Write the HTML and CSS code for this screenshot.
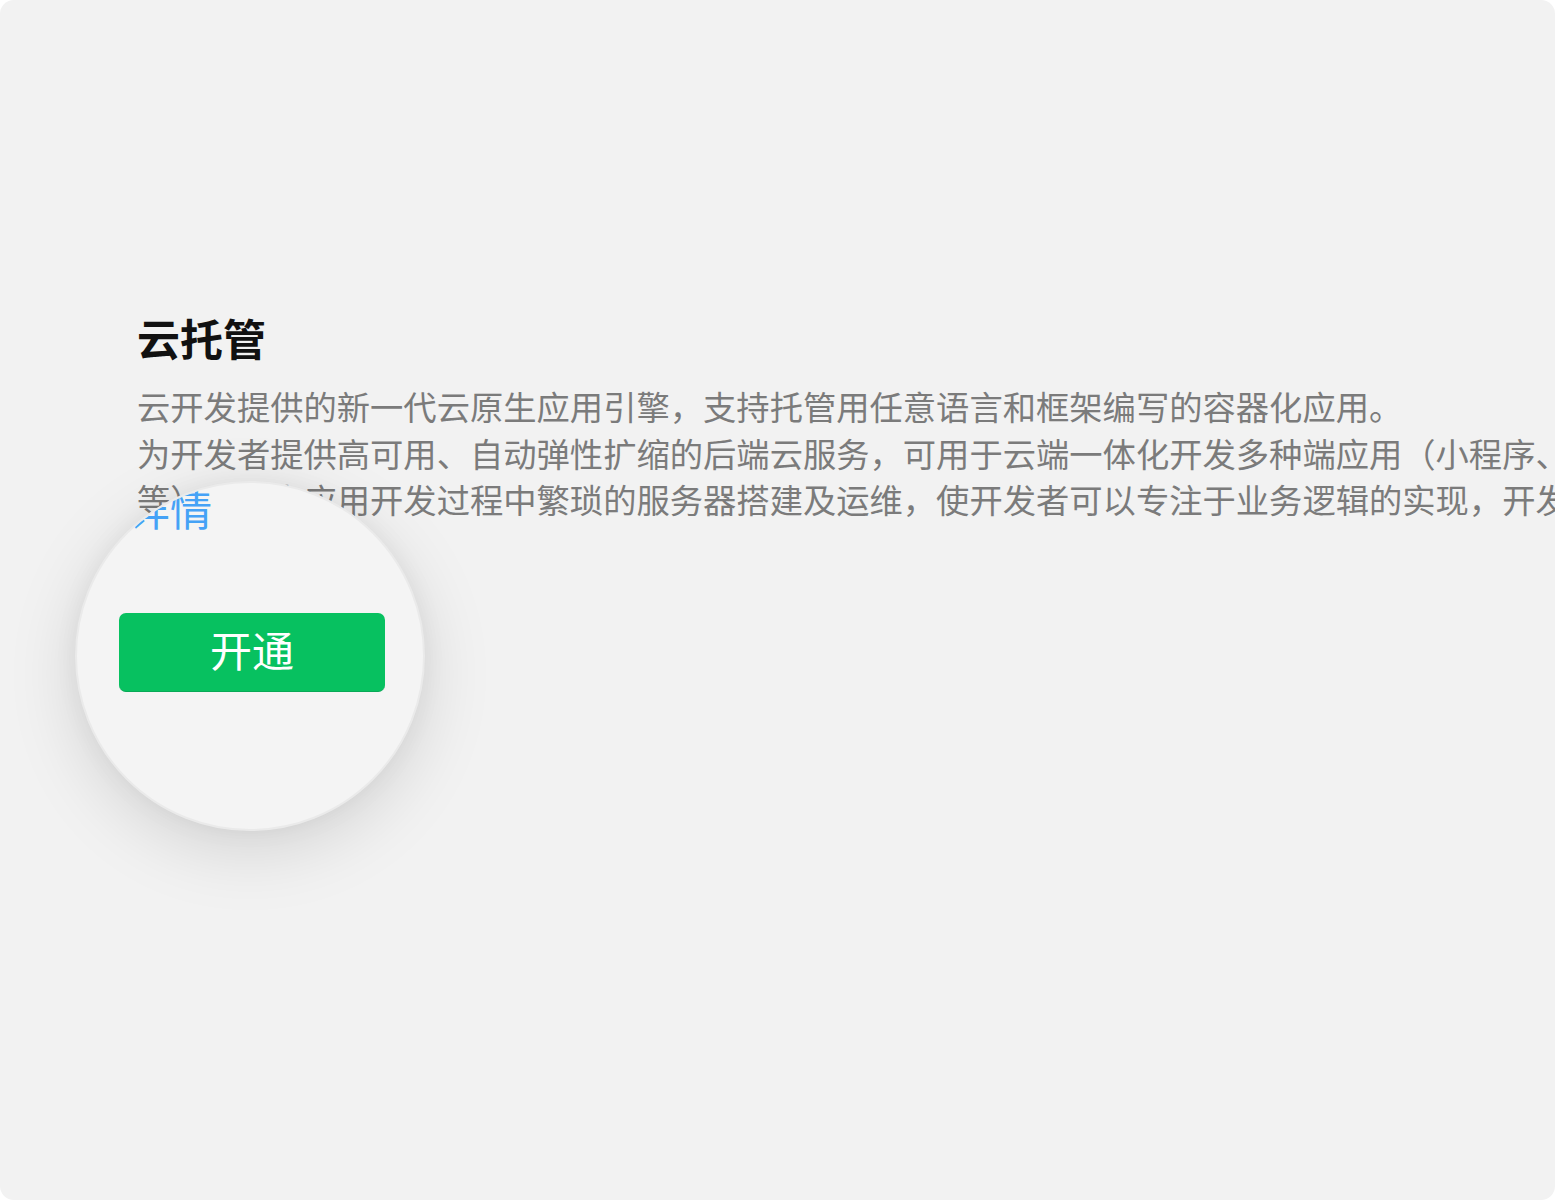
FILE: index.html
```html
<!DOCTYPE html>
<html lang="zh-CN">
<head>
<meta charset="utf-8">
<title>云托管</title>
<link rel="stylesheet" href="styles.css">
</head>
<body>
<div class="card">
  <section class="intro">
    <h1 class="title">云托管</h1>
    <div class="desc">
      <p class="line">云开发提供的新一代云原生应用引擎，支持托管用任意语言和框架编写的容器化应用。</p>
      <p class="line">为开发者提供高可用、自动弹性扩缩的后端云服务，可用于云端一体化开发多种端应用（小程序、公众号、Web 应用、Flutter 客户端</p>
      <p class="line">等），免去应用开发过程中繁琐的服务器搭建及运维，使开发者可以专注于业务逻辑的实现，开发门槛更低，效率更高。</p>
    </div>
  </section>
  <div class="lens">
    <a class="lens-link">详情</a>
    <button class="lens-btn">开通</button>
  </div>
</div>
</body>
</html>
```
FILE: styles.css
```css
html, body {
  margin: 0;
  padding: 0;
  background: #ffffff;
}

body {
  font-family: "Noto Sans CJK SC", "Noto Sans", sans-serif;
  text-spacing-trim: space-all;
}

.card {
  position: relative;
  width: 1555px;
  height: 1200px;
  background: #f2f2f2;
  border-radius: 14px;
  overflow: hidden;
  box-sizing: border-box;
  padding: 307px 0 0 137px;
}

.intro {
  display: flex;
  flex-direction: column;
}

.title {
  margin: 0;
  font-size: 43px;
  line-height: 60px;
  font-weight: 700;
  color: #111111;
}

.desc {
  margin-top: 16px;
  width: 3000px;
}

.line {
  margin: 0;
  font-size: 33.3px;
  line-height: 46.6px;
  color: #7b7b7b;
  white-space: nowrap;
}

.lens {
  position: absolute;
  left: 75px;
  top: 481px;
  width: 350px;
  height: 350px;
  box-sizing: border-box;
  border-radius: 50%;
  border: 2px solid #eaeaea;
  background: #f4f4f4;
  overflow: hidden;
  box-shadow: 0 18px 70px rgba(0, 0, 0, 0.13), 0 0 24px rgba(0, 0, 0, 0.05);
  display: flex;
  flex-direction: column;
  align-items: flex-start;
  padding: 4px 0 0 42px;
}

.lens-link {
  margin-left: 9px;
  font-size: 42px;
  line-height: 42px;
  color: #45a2f6;
}

.lens-btn {
  margin-top: 84px;
  width: 266px;
  height: 79px;
  border: none;
  border-bottom: 1px solid #08a957;
  border-radius: 7px;
  background: #07c160;
  color: #ffffff;
  font-family: "Noto Sans CJK SC", sans-serif;
  font-size: 42px;
  line-height: 1;
  padding: 0 0 6px 0;
}
```
